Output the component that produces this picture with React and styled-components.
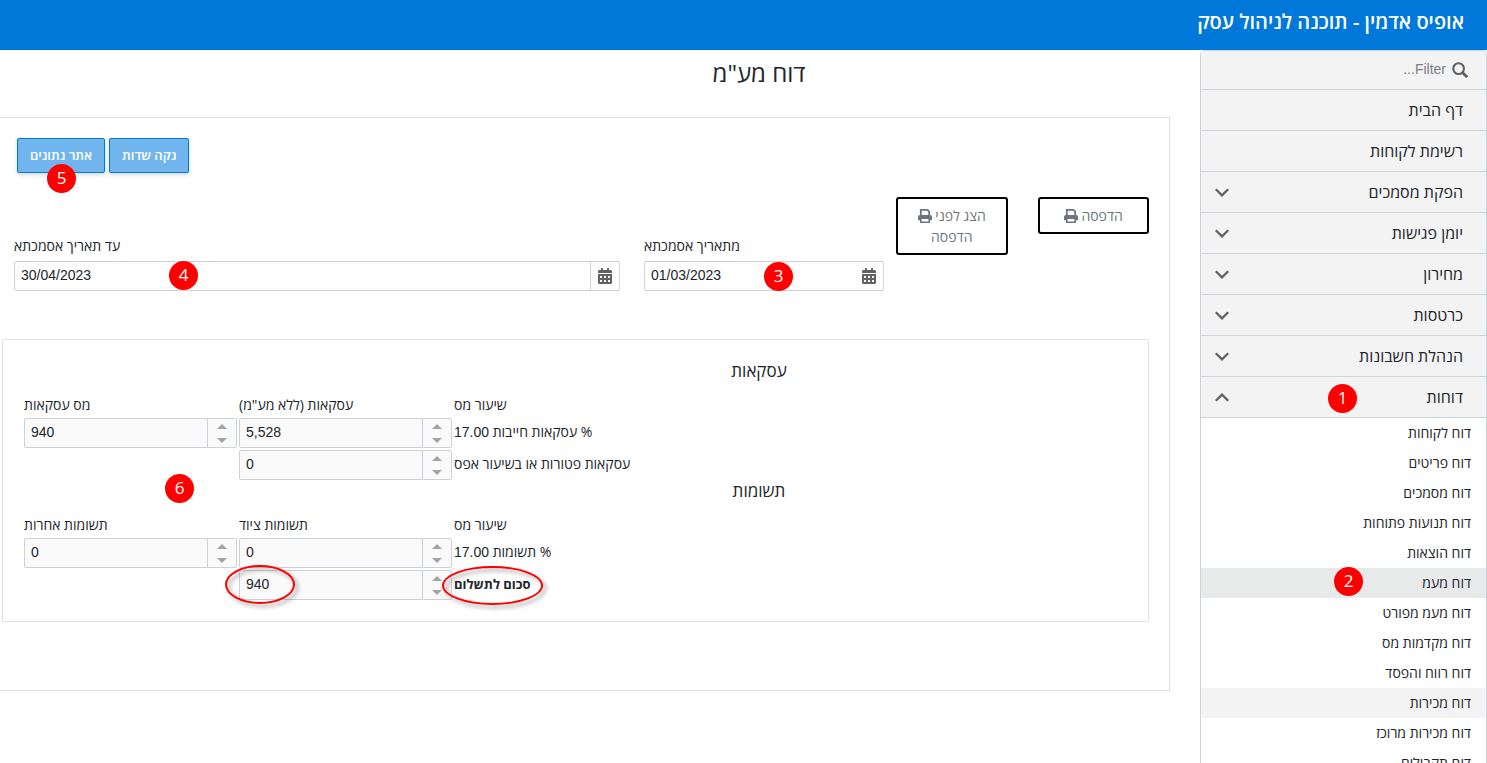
import React, { useState } from 'react';
import styled, { createGlobalStyle, css } from 'styled-components';
import { FaCalendarAlt } from 'react-icons/fa';

const menuItems = [
    { label: 'דף הבית' },
    { label: 'רשימת לקוחות' },
    { label: 'הפקת מסמכים', expandable: true },
    { label: 'יומן פגישות', expandable: true },
    { label: 'מחירון', expandable: true },
    { label: 'כרטסות', expandable: true },
    { label: 'הנהלת חשבונות', expandable: true },
    { label: 'דוחות', expandable: true, open: true, step: 1 },
];

const reports = [
    { label: 'דוח לקוחות' },
    { label: 'דוח פריטים' },
    { label: 'דוח מסמכים' },
    { label: 'דוח תנועות פתוחות' },
    { label: 'דוח הוצאות' },
    { label: 'דוח מעמ', state: 'selected', step: 2 },
    { label: 'דוח מעמ מפורט' },
    { label: 'דוח מקדמות מס' },
    { label: 'דוח רווח והפסד' },
    { label: 'דוח מכירות', state: 'hovered' },
    { label: 'דוח מכירות מרוכז' },
    { label: 'דוח תקבולים' },
];

const Chevron = ({ open }) => (
    <svg width="14" height="9" viewBox="0 0 14 9" fill="none" stroke="#5f6163" strokeWidth="2.2" aria-hidden="true">
        <path d={open ? 'M0.8 7.8 7 1.6l6.2 6.2' : 'M0.8 1.2 7 7.4l6.2-6.2'} />
    </svg>
);

const SearchIcon = () => (
    <svg width="16" height="16" viewBox="0 0 15 15" fill="none" stroke="#5f6163" strokeWidth="2" aria-hidden="true">
        <circle cx="6.2" cy="6.2" r="5" />
        <path d="M9.8 9.8 14.2 14.2" strokeWidth="2.6" />
    </svg>
);

const PrintIcon = () => (
    <svg width="14" height="14" viewBox="0 0 14 14" aria-hidden="true">
        <path fill="none" stroke="currentColor" strokeWidth="1.8" d="M2.800 7V.9h6.700l1.700 1.700V7" />
        <path
            fill="currentColor"
            fillRule="evenodd"
            d="M2 6h10a2 2 0 0 1 2 2v3.200h-2V14H2v-2.800H0V8a2 2 0 0 1 2-2zm1.600 4v2.400h6.800V10z"
        />
    </svg>
);

const DateField = ({ id, label, initial, grow, divided, children }) => {
    const [value, setValue] = useState(initial);

    return (
        <FieldBox $grow={grow}>
            <FieldLabel htmlFor={id}>{label}</FieldLabel>
            <InputGroup>
                <TextInput id={id} type="text" value={value} onChange={(e) => setValue(e.target.value)} />
                <PickerButton type="button" aria-label="בחר תאריך" $divided={divided}>
                    <FaCalendarAlt />
                </PickerButton>
                {children}
            </InputGroup>
        </FieldBox>
    );
}

const NumberField = ({ label, value, children }) => (
    <InputGroup $muted>
        <TextInput type="text" aria-label={label} defaultValue={value} />
        <Spinner>
            <SpinButton type="button" aria-label="הגדל"><Arrow $up /></SpinButton>
            <SpinButton type="button" aria-label="הקטן"><Arrow /></SpinButton>
        </Spinner>
        {children}
    </InputGroup>
);

const App = () => {
    const [filter, setFilter] = useState('');

    return (
        <Page dir="rtl">
            <GlobalStyle />
            <Header>
                <Brand>אופיס אדמין - תוכנה לניהול עסק</Brand>
            </Header>
            <Body>
                <Sidebar>
                    <SearchRow>
                        <SearchIcon />
                        <SearchInput
                            type="text"
                            aria-label="Filter"
                            placeholder="Filter..."
                            value={filter}
                            onChange={(e) => setFilter(e.target.value)}
                        />
                    </SearchRow>
                    {menuItems.map((item) => (
                        <MenuLink href="#" key={item.label}>
                            {item.label}
                            {item.expandable && <Chevron open={item.open} />}
                            {item.step && <Badge $left={127} $top={7}>{item.step}</Badge>}
                        </MenuLink>
                    ))}
                    {reports.map((item) => (
                        <SubLink href="#" key={item.label} $state={item.state}>
                            {item.label}
                            {item.step && <Badge $left={133} $top={-1}>{item.step}</Badge>}
                        </SubLink>
                    ))}
                </Sidebar>
                <Main>
                    <Title>דוח מע"מ</Title>
                    <Card>
                        <Actions>
                            <ActionButton type="button">נקה שדות</ActionButton>
                            <ActionButton type="button">
                                אתר נתונים
                                <Badge $left={29} $top={25}>5</Badge>
                            </ActionButton>
                        </Actions>
                        <FilterRow>
                            <PrintGroup>
                                <PrintButton type="button">הדפסה <PrintIcon /></PrintButton>
                                <PrintButton type="button">הצג לפני <PrintIcon /> הדפסה</PrintButton>
                            </PrintGroup>
                            <DateFields>
                                <DateField id="from" label="מתאריך אסמכתא" initial="01/03/2023">
                                    <Badge $left={119} $top={0}>3</Badge>
                                </DateField>
                                <DateField id="to" label="עד תאריך אסמכתא" initial="30/04/2023" grow divided>
                                    <Badge $left={154} $top={-1}>4</Badge>
                                </DateField>
                            </DateFields>
                        </FilterRow>
                        <Report>
                            <SectionTitle>עסקאות</SectionTitle>
                            <Grid>
                                <HeadCell>מס עסקאות</HeadCell>
                                <HeadCell>עסקאות (ללא מע"מ)</HeadCell>
                                <HeadCell>שיעור מס</HeadCell>

                                <NumberField label="מס עסקאות" value="940" />
                                <NumberField label="עסקאות חייבות" value="5,528" />
                                <Cell>% עסקאות חייבות <Num>17.00</Num></Cell>

                                <Cell><Badge $left={141} $top={24}>6</Badge></Cell>
                                <NumberField label="עסקאות פטורות" value="0" />
                                <Cell>עסקאות פטורות או בשיעור אפס</Cell>
                            </Grid>
                            <SectionTitle>תשומות</SectionTitle>
                            <Grid>
                                <HeadCell>תשומות אחרות</HeadCell>
                                <HeadCell>תשומות ציוד</HeadCell>
                                <HeadCell>שיעור מס</HeadCell>

                                <NumberField label="תשומות אחרות" value="0" />
                                <NumberField label="תשומות ציוד" value="0" />
                                <Cell>% תשומות <Num>17.00</Num></Cell>

                                <Cell />
                                <NumberField label="סכום לתשלום" value="940">
                                    <Ring $left={-15} $top={-6} $width={70} $height={39} />
                                </NumberField>
                                <Cell $bold>
                                    סכום לתשלום
                                    <Ring $left={-12} $top={-4} $width={101} $height={39} />
                                </Cell>
                            </Grid>
                        </Report>
                    </Card>
                </Main>
            </Body>
        </Page>
    );
}

const GlobalStyle = createGlobalStyle`
    * {
        box-sizing: border-box;
    }

    body {
        margin: 0;
        background: #fff;
        color: #212529;
        font-family: "Open Sans", "Liberation Sans", sans-serif;
        font-size: 14px;
    }

    button, input {
        font-family: inherit;
    }
`;

const Page = styled.div`
    display: flex;
    flex-direction: column;
    height: 100vh;
    overflow: hidden;
`;

const Header = styled.header`
    flex: none;
    height: 50px;
    padding: 8px 23px;
    background: #0078d9;
`;

const Brand = styled.div`
    color: #fff;
    font-size: 20px;
    font-weight: 600;
    line-height: 28px;
`;

const Body = styled.div`
    display: flex;
    flex: 1;
    min-height: 0;
`;

const Sidebar = styled.nav`
    flex: none;
    width: 287px;
    overflow: hidden;
    border: 1px solid #cdd1d8;
    border-bottom: none;
    border-radius: 5px 5px 0 0;
`;

const SearchRow = styled.div`
    display: flex;
    align-items: center;
    gap: 6px;
    height: 39px;
    padding: 0 18px;
    background: #f3f3f3;
    border-bottom: 1px solid #cdd1d8;
`;

const SearchInput = styled.input`
    flex: 1;
    min-width: 0;
    padding: 0 0 2px;
    border: none;
    outline: none;
    background: transparent;
    font-family: "Liberation Sans", sans-serif;
    font-size: 14px;

    &::placeholder {
        color: #7b7f83;
    }
`;

const MenuLink = styled.a`
    position: relative;
    display: flex;
    align-items: center;
    justify-content: space-between;
    height: 41px;
    padding: 0 23px 0 14px;
    background: #f3f3f3;
    border-bottom: 1px solid #cdd1d8;
    color: #212529;
    font-size: 16px;
    line-height: 22px;
    text-decoration: none;
`;

const SubLink = styled.a`
    position: relative;
    display: block;
    padding: 1px 15px;
    color: #212529;
    font-size: 14px;
    line-height: 28px;
    text-decoration: none;

    ${(props) => props.$state === 'selected' && css`background: #e8eaea;`}
    ${(props) => props.$state === 'hovered' && css`background: #f3f3f3;`}
`;

const Main = styled.main`
    flex: 1;
    min-width: 0;
    padding-right: 30px;
`;

const Title = styled.h1`
    margin: 0;
    padding: 7px 0 28px 348px;
    font-size: 24px;
    font-weight: 400;
    line-height: 32px;
    text-align: center;
`;

const Card = styled.section`
    padding: 20px 20px 68px 2px;
    border: 1px solid #dee2e6;
    border-left: none;
`;

const Actions = styled.div`
    display: flex;
    justify-content: flex-end;
    gap: 4px;
    padding-left: 15px;
`;

const ActionButton = styled.button`
    position: relative;
    height: 35px;
    padding: 0 12px 2px;
    border: 1px solid #0078d9;
    border-radius: 2px;
    background: #71b5ee;
    box-shadow: 0 2px 4px rgba(0,0,0,.15);
    color: #fff;
    cursor: pointer;
    font-size: 13px;
    font-weight: 600;
`;

const FilterRow = styled.div`
    display: flex;
    gap: 12px;
    margin: 24px 0 48px;
    padding-left: 12px;
`;

const PrintGroup = styled.div`
    display: flex;
    flex: none;
    align-items: flex-start;
    gap: 30px;
    width: 253px;
`;

const PrintButton = styled.button`
    flex: 1;
    padding: 6px 18px;
    border: 2px solid #000;
    border-radius: 3px;
    background: #fff;
    color: #6c757d;
    cursor: pointer;
    font-size: 14px;
    line-height: 21px;

    svg {
        vertical-align: -2px;
    }
`;

const DateFields = styled.div`
    display: flex;
    flex: 1;
    gap: 24px;
    min-width: 0;
`;

const FieldBox = styled.div`
    width: 240px;
    padding-top: 39px;

    ${(props) => props.$grow && css`
        flex: 1;
        min-width: 0;
    `}
`;

const FieldLabel = styled.label`
    display: block;
    margin-bottom: 5px;
    font-size: 14px;
    line-height: 20px;
    text-align: left;
`;

const InputGroup = styled.div`
    position: relative;
    display: flex;
    direction: ltr;
    height: 30px;
    border: 1px solid #cdd1d8;
    border-radius: 2px;
    background: ${(props) => props.$muted ? '#fafafa' : '#fff'};
`;

const TextInput = styled.input`
    flex: 1;
    min-width: 0;
    padding: 0 6px 2px;
    border: none;
    outline: none;
    background: transparent;
    color: #212529;
    font-family: "Liberation Sans", sans-serif;
    font-size: 14px;
`;

const PickerButton = styled.button`
    display: flex;
    align-items: center;
    justify-content: center;
    width: 29px;
    padding: 0;
    border: none;
    background: transparent;
    color: #5f6163;
    cursor: pointer;
    font-size: 16px;

    ${(props) => props.$divided && css`border-left: 1px solid #cdd1d8;`}
`;

const Spinner = styled.div`
    display: flex;
    flex-direction: column;
    width: 29px;
    border-left: 1px solid #cdd1d8;
`;

const SpinButton = styled.button`
    display: flex;
    flex: 1;
    align-items: center;
    justify-content: center;
    padding: 0;
    border: none;
    background: transparent;
    cursor: pointer;
`;

const Arrow = styled.span`
    border: 5px solid transparent;
    ${(props) => props.$up ? css`
        border-top: none;
        border-bottom-color: #a3a3a3;
    ` : css`
        border-bottom: none;
        border-top-color: #a3a3a3;
    `}
`;

const Report = styled.section`
    padding: 21px 21px 21px;
    border: 1px solid #dee2e6;
    border-radius: 2px;
`;

const SectionTitle = styled.h2`
    margin: 0 0 11px;
    padding-left: 367px;
    font-size: 17px;
    font-weight: 400;
    line-height: 20px;
    text-align: center;

    div + & {
        padding-top: 1px;
    }
`;

const Grid = styled.div`
    display: grid;
    grid-template-columns: 213px 213px 1fr;
    gap: 2px;
    direction: ltr;
`;

const HeadCell = styled.div`
    padding-top: 1px;
    direction: rtl;
    font-size: 14px;
    line-height: 23px;
    text-align: left;
`;

const Cell = styled.div`
    position: relative;
    direction: rtl;
    font-size: ${(props) => props.$bold ? 13 : 14}px;
    font-weight: ${(props) => props.$bold ? 700 : 400};
    line-height: 28px;
    text-align: left;
`;

const Num = styled.span`
    font-family: "Liberation Sans", sans-serif;
`;

/* numbered marker of the guide, floats over the form */
const Badge = styled.span`
    position: absolute;
    z-index: 1;
    left: ${(props) => props.$left}px;
    top: ${(props) => props.$top}px;
    width: 29px;
    height: 29px;
    border-radius: 50%;
    background: #f00;
    color: #fff;
    font-family: "Open Sans", sans-serif;
    font-size: 17px;
    font-weight: 400;
    line-height: 28px;
    text-align: center;
`;

const Ring = styled.span`
    position: absolute;
    z-index: 1;
    left: ${(props) => props.$left}px;
    top: ${(props) => props.$top}px;
    width: ${(props) => props.$width}px;
    height: ${(props) => props.$height}px;
    border: 2px solid #f00;
    border-radius: 50%;
    filter: drop-shadow(3px 3px 2px rgba(0,0,0,.4));
    pointer-events: none;
`;

export default App;
